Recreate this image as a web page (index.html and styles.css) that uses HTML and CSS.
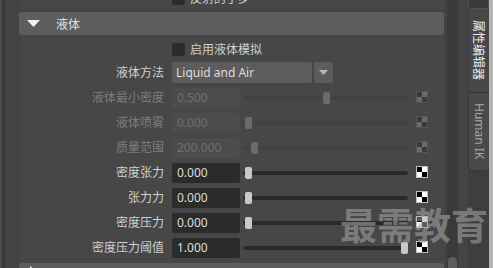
FILE: index.html
```html
<!doctype html>
<html>
    <head>
        <meta charset="utf-8">
        <link rel="stylesheet" href="styles.css">
    </head>
    <body>
        <div class="window">
            <div class="edge-left"></div>

            <div class="editor">
                <div class="pane top">
                    <div class="check-row">
                        <span class="box"></span><span class="check-text">反射的子步</span>
                    </div>
                </div>

                <div class="frame-head">
                    <svg class="arrow" width="13" height="7" viewBox="0 0 13 7"><polygon points="0,0 13,0 6.5,7" fill="#f2f2f2"/></svg>
                    <span>液体</span>
                </div>

                <div class="pane body">
                    <div class="check-row">
                        <span class="box"></span><span class="check-text">启用液体模拟</span>
                    </div>

                    <div class="row method">
                        <span class="label">液体方法</span>
                        <div class="select">Liquid and Air</div>
                        <div class="select-btn">
                            <svg width="9" height="5" viewBox="0 0 9 5"><polygon points="0,0 9,0 4.5,5" fill="#b8b8b8"/></svg>
                        </div>
                    </div>

                    <div class="row off">
                        <span class="label">液体最小密度</span>
                        <div class="field">0.500</div>
                        <div class="slider"><span class="knob" style="left:80px"></span></div>
                        <span class="checker"></span>
                    </div>
                    <div class="row off">
                        <span class="label">液体喷雾</span>
                        <div class="field">0.000</div>
                        <div class="slider"><span class="knob" style="left:2px"></span></div>
                        <span class="checker"></span>
                    </div>
                    <div class="row off">
                        <span class="label">质量范围</span>
                        <div class="field">200.000</div>
                        <div class="slider"><span class="knob" style="left:8px"></span></div>
                        <span class="checker"></span>
                    </div>
                    <div class="row">
                        <span class="label">密度张力</span>
                        <div class="field">0.000</div>
                        <div class="slider"><span class="knob" style="left:2px"></span></div>
                        <span class="checker"></span>
                    </div>
                    <div class="row">
                        <span class="label">张力力</span>
                        <div class="field">0.000</div>
                        <div class="slider"><span class="knob" style="left:2px"></span></div>
                        <span class="checker"></span>
                    </div>
                    <div class="row">
                        <span class="label">密度压力</span>
                        <div class="field">0.000</div>
                        <div class="slider"><span class="knob" style="left:2px"></span></div>
                        <span class="checker"></span>
                    </div>
                    <div class="row">
                        <span class="label">密度压力阈值</span>
                        <div class="field">1.000</div>
                        <div class="slider"><span class="knob" style="left:158px"></span></div>
                        <span class="checker"></span>
                    </div>
                </div>

                <div class="frame-head closed">
                    <svg class="arrow" width="13" height="13" viewBox="0 0 13 13"><polygon points="3,3 10,9 3,15" fill="#f2f2f2"/></svg>
                </div>
            </div>

            <div class="scrollbar"><div class="thumb"></div></div>
            <div class="gap"></div>

            <div class="tabs">
                <div class="tab-cap"></div>
                <div class="tab active">属性编辑器</div>
                <div class="tab">Human IK</div>
            </div>
            <div class="edge-right"></div>

            <div class="watermark">最需教育</div>
        </div>
    </body>
</html>
```

FILE: styles.css
```css
*{
    margin: 0;
    padding: 0;
    box-sizing: border-box;
}
html,body{
    width: 493px;
    height: 268px;
    overflow: hidden;
}
body{
    background-color: #434343;
    font-family: "Noto Sans", "Noto Sans CJK SC", sans-serif;
    font-size: 12px;
    color: #cccccc;
}
.window{
    position: relative;
    display: flex;
    height: 268px;
}
.edge-left{
    width: 5px;
    background: linear-gradient(to right, #4c4c4c 0 2px, #383838 2px);
}
.editor{
    width: 442px;
    padding-left: 14px;
    overflow: hidden;
}

/* panes */
.pane{
    width: 425px;
    padding-left: 2px;
    background: linear-gradient(to right, #434343 0 2px, #474747 2px);
}
.pane.top{
    margin-top: -14px;
    height: 24px;
}
.pane.body{
    padding-top: 2px;
    padding-bottom: 2px;
}
.frame-head{
    display: flex;
    align-items: center;
    width: 425px;
    height: 23px;
    margin-top: 2px;
    padding-left: 8px;
    background-color: #5d5d5d;
    border-radius: 3px;
    color: #e2e2e2;
}
.frame-head span{
    margin-left: 16px;
}
.frame-head.closed{
    margin-top: 0;
    align-items: flex-start;
}

/* checkbox row */
.check-row{
    display: flex;
    align-items: center;
    height: 24px;
    padding-left: 151px;
}
.box{
    width: 13px;
    height: 13px;
    background-color: #2b2b2b;
    border-radius: 2px;
}
.check-text{
    margin-left: 5px;
    color: #cfcfcf;
}

/* attribute rows */
.row{
    display: flex;
    align-items: flex-start;
    height: 25px;
}
.label{
    width: 143px;
    margin-top: 2px;
    line-height: 20px;
    text-align: right;
    color: #d0d0d0;
}
.field{
    width: 68px;
    height: 20px;
    margin: 2px 0 0 8px;
    padding-left: 5px;
    line-height: 20px;
    background-color: #2b2b2b;
    border-radius: 2px;
    color: #dddddd;
}
.slider{
    position: relative;
    width: 165px;
    height: 4px;
    margin: 10px 0 0 3px;
    background-color: #2a2a2a;
    border-radius: 2px;
}
.knob{
    position: absolute;
    top: -4px;
    width: 7px;
    height: 12px;
    background-color: #c9c9c9;
    border-radius: 2px;
}
.checker{
    width: 12px;
    height: 12px;
    margin: 5px 0 0 8px;
    border: 1px solid #bdbdbd;
    background: conic-gradient(#ffffff 0 25%, #000000 0 50%, #ffffff 0 75%, #000000 0);
}
.row.off .label{
    color: #7c7c7c;
}
.row.off .field{
    background-color: #4c4c4c;
    color: #6f6f6f;
}
.row.off .slider{
    background-color: #424242;
}
.row.off .knob{
    background-color: #6b6b6b;
}
.row.off .checker{
    border-color: #555555;
    background: conic-gradient(#6a6a6a 0 25%, #3a3a3a 0 50%, #6a6a6a 0 75%, #3a3a3a 0);
}

/* dropdown */
.row.method .select{
    width: 140px;
    height: 21px;
    margin: 1px 0 0 8px;
    padding-left: 4px;
    line-height: 21px;
    background-color: #5c5c5c;
    border-radius: 2px;
    color: #dedede;
}
.select-btn{
    display: flex;
    align-items: center;
    justify-content: center;
    width: 19px;
    height: 21px;
    margin: 1px 0 0 2px;
    background-color: #5c5c5c;
    border-radius: 2px;
}

/* scrollbar + tabs */
.scrollbar{
    display: flex;
    flex-direction: column;
    justify-content: flex-end;
    width: 11px;
    background-color: #3a3a3a;
}
.thumb{
    height: 11px;
    margin: 0 1px;
    background-color: #5c5c5c;
    border-radius: 5px 5px 0 0;
}
.gap{
    width: 10px;
    background-color: #444444;
}
.tabs{
    display: flex;
    flex-direction: column;
    width: 21px;
    background-color: #3e3e3e;
}
.tab-cap{
    height: 9px;
    background-color: #3a3a3a;
    border: 1px solid #505050;
    border-top: 0;
    border-radius: 0 0 3px 3px;
}
.tab{
    display: flex;
    align-items: center;
    justify-content: center;
    writing-mode: vertical-rl;
    text-orientation: sideways;
    height: 78px;
    background-color: #4a4a4a;
    border-left: 1px solid #3a3a3a;
    border-bottom: 1px solid #353535;
    border-radius: 0 0 3px 3px;
    color: #a8a8a8;
}
.tab.active{
    height: 84px;
    background-color: #474747;
    color: #eeeeee;
}
.edge-right{
    width: 4px;
    background-color: #b5b5b5;
}

.watermark{
    position: absolute;
    left: 340px;
    top: 206px;
    font-family: "Noto Sans CJK SC", sans-serif;
    font-size: 37px;
    font-weight: 700;
    line-height: 1;
    color: rgba(165, 165, 165, 0.58);
    pointer-events: none;
}
```
